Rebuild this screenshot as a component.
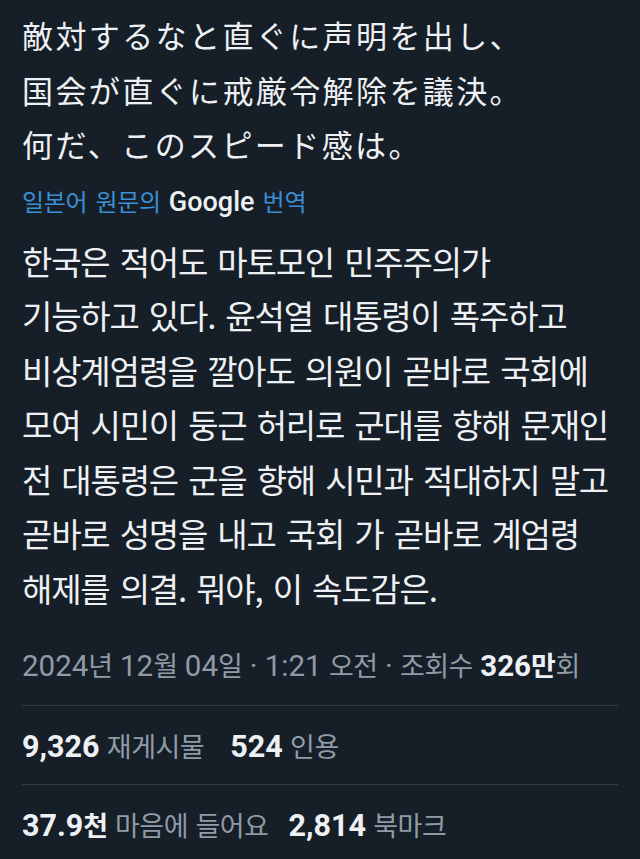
const jaLines = [
  "敵対するなと直ぐに声明を出し、",
  "国会が直ぐに戒厳令解除を議決。",
  "何だ、このスピード感は。",
];

const koLines = [
  "한국은 적어도 마토모인 민주주의가",
  "기능하고 있다. 윤석열 대통령이 폭주하고",
  "비상계엄령을 깔아도 의원이 곧바로 국회에",
  "모여 시민이 둥근 허리로 군대를 향해 문재인",
  "전 대통령은 군을 향해 시민과 적대하지 말고",
  "곧바로 성명을 내고 국회 가 곧바로 계엄령",
  "해제를 의결. 뭐야, 이 속도감은.",
];

// hangul runs get the CJK font, digits/latin stay in Roboto
function Mixed({ text }: { text: string }) {
  const parts = text.split(/([가-힣]+)/);
  return (
    <>
      {parts.map((p, i) =>
        i % 2 === 1 ? (
          <span
            key={i}
            className="font-['Noto_Sans_CJK_KR',sans-serif] text-[27px] tracking-[-0.5px] leading-none"
          >
            {p}
          </span>
        ) : (
          <span key={i}>{p}</span>
        )
      )}
    </>
  );
}

function Stat({ value, label }: { value: string; label: string }) {
  return (
    <>
      <span className="font-bold text-[30.5px] text-[#eef1f3]">
        <Mixed text={value} />
      </span>{" "}
      <Mixed text={label} />
    </>
  );
}

export default function App() {
  return (
    <div className="min-h-[859px] w-[640px] bg-[#161e28] px-[22px] pt-[8px] text-[#eef1f3] overflow-hidden">
      <div className="font-['Noto_Sans_CJK_JP',sans-serif] text-[31px] leading-[54.5px] tracking-[2.4px] whitespace-nowrap">
        {jaLines.map((l) => (
          <div key={l}>{l}</div>
        ))}
      </div>

      <div className="mt-[14px] font-['Noto_Sans_CJK_KR',sans-serif] text-[24px] leading-[30px] tracking-[-0.3px] [word-spacing:3px] text-[#3b8fd4] whitespace-nowrap">
        일본어 원문의{" "}
        <span className="font-['Roboto',sans-serif] font-medium text-[27px] tracking-normal text-[#eef1f3]">
          Google
        </span>{" "}
        번역
      </div>

      <div className="mt-[17px] font-['Noto_Sans_CJK_KR',sans-serif] text-[33px] leading-[54.5px] tracking-[-1.2px] [word-spacing:4px] whitespace-nowrap">
        {koLines.map((l) => (
          <div key={l}>{l}</div>
        ))}
      </div>

      <div className="mt-[33px] font-['Roboto',sans-serif] text-[29.5px] leading-[36px] text-[#909ba7] whitespace-nowrap">
        <Mixed text="2024년 12월 04일 · 1:21 오전 · 조회수 " />
        <span className="font-bold text-[#eef1f3]">
          <Mixed text="326만" />
        </span>
        <Mixed text="회" />
      </div>

      <div className="mt-[21px] h-px bg-[#2f3a44]" />

      <div className="mt-[23px] font-['Roboto',sans-serif] text-[29.5px] leading-[36px] text-[#909ba7] whitespace-nowrap">
        <Stat value="9,326" label="재게시물" />
        <span className="ml-[26px]" />
        <Stat value="524" label="인용" />
      </div>

      <div className="mt-[19px] h-px bg-[#2f3a44]" />

      <div className="mt-[23px] font-['Roboto',sans-serif] text-[29.5px] leading-[36px] text-[#909ba7] whitespace-nowrap">
        <Stat value="37.9천" label="마음에 들어요" />
        <span className="ml-[20px]" />
        <Stat value="2,814" label="북마크" />
      </div>
    </div>
  );
}
